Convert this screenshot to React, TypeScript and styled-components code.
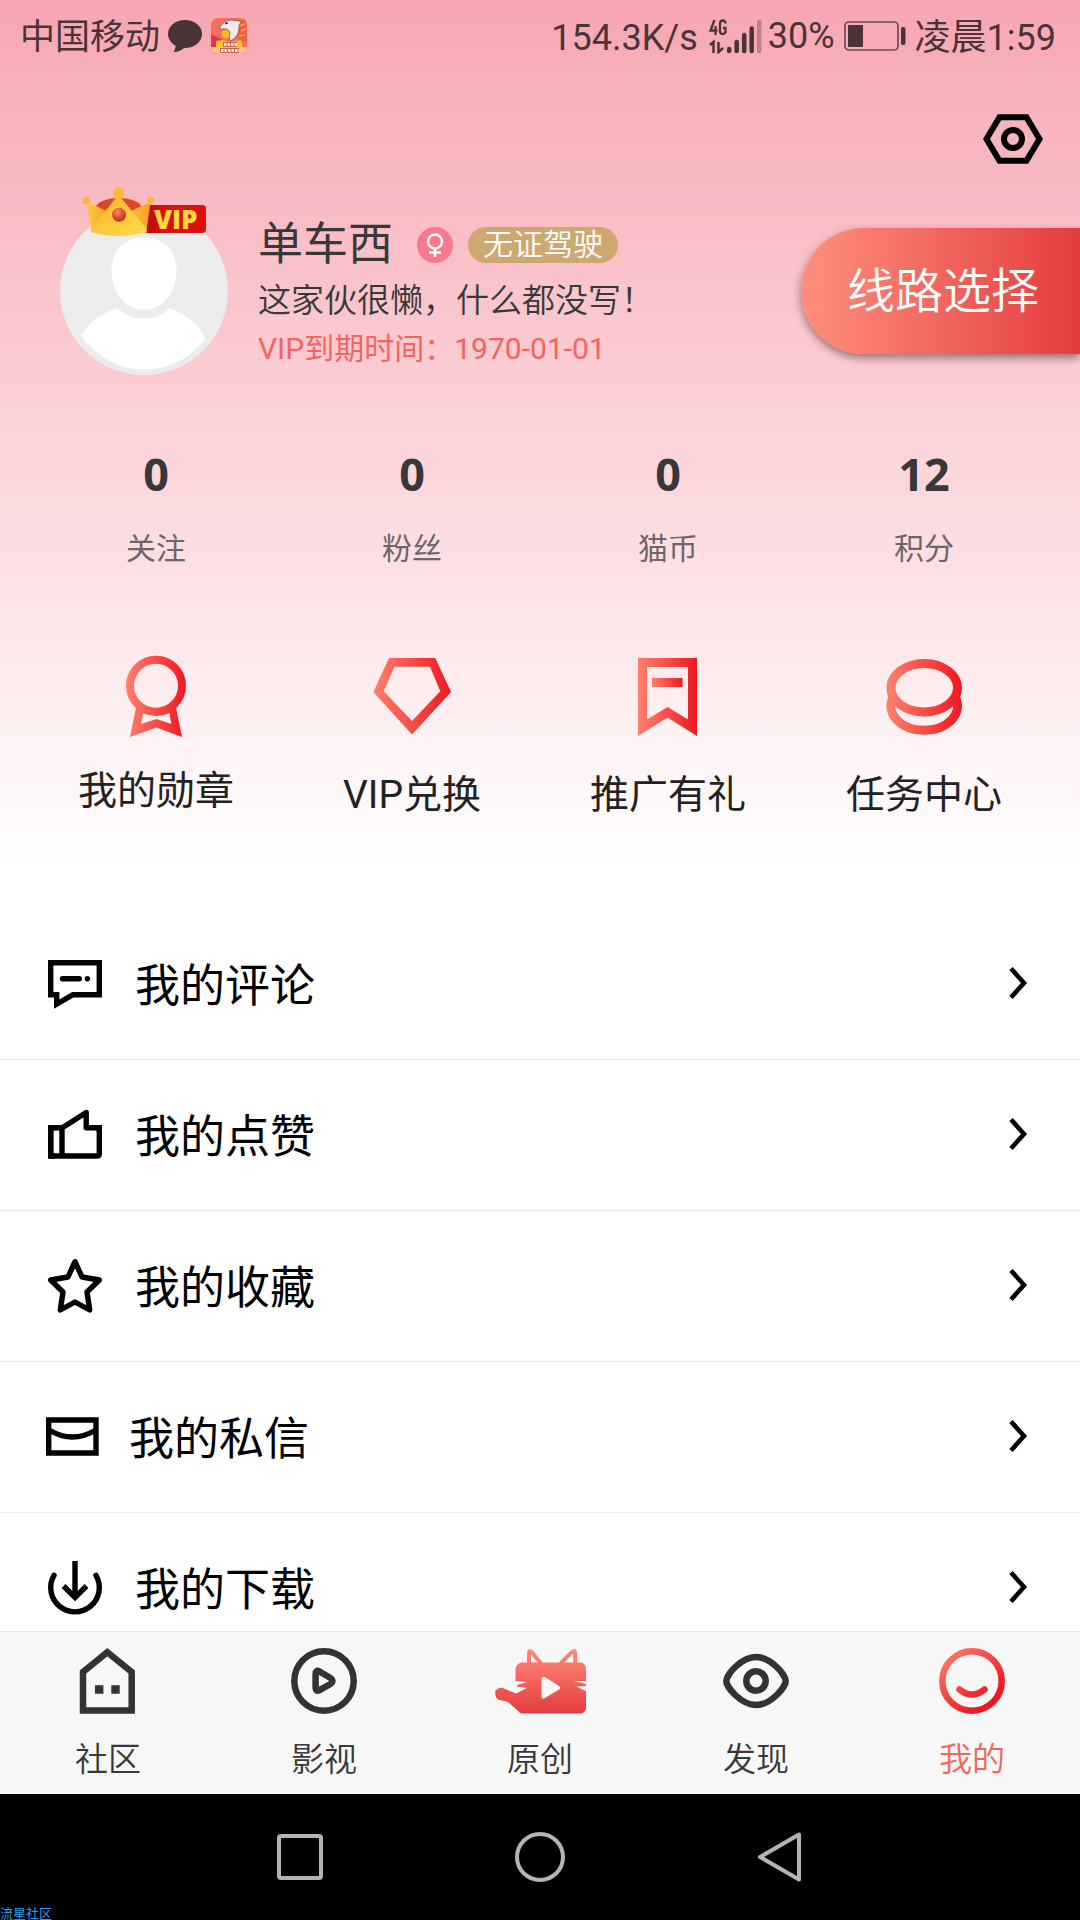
import React from "react";
import styled, { createGlobalStyle } from "styled-components";

const GlobalStyle = createGlobalStyle`
  *, *::before, *::after { box-sizing: border-box; }
  body {
    margin: 0;
    font-family: Roboto, "Noto Sans CJK SC", sans-serif;
    color: #383838;
    background: #fff;
  }
  button { border: 0; padding: 0; background: none; font: inherit; color: inherit; cursor: pointer; }
  a { color: inherit; text-decoration: none; }
  svg { display: block; flex: none; }
`;

const Screen = styled.div`
  display: flex;
  flex-direction: column;
  height: 100vh;
  overflow: hidden;
`;

const Content = styled.main`
  flex: 1;
  min-height: 0;
  overflow: hidden;
  background: linear-gradient(#f7a7b1, #ffffff 870px) no-repeat;
`;

const StatusBar = styled.header`
  display: flex;
  align-items: center;
  justify-content: space-between;
  height: 72px;
  padding: 0 24px 0 20px;
  font-size: 36px;
  line-height: 48px;
  color: #4b3437;
  font-weight: 400;
`;

const StatusGroup = styled.div<{ $gap: number }>`
  display: flex;
  align-items: center;
  gap: ${(p) => p.$gap}px;
`;

const StatusText = styled.span`
  padding-top: 4px;
`;

const Carrier = styled(StatusText)`
  font-size: 35px;
`;

const Toolbar = styled.div`
  display: flex;
  justify-content: flex-end;
  padding: 42px 37px 0;
`;

const Profile = styled.section`
  display: flex;
  align-items: center;
  margin-top: 43px;
  padding-left: 60px;
`;

const Avatar = styled.div`
  position: relative;
  flex: none;
  width: 168px;
  height: 168px;
`;

const Crown = styled.svg`
  position: absolute;
  left: 22px;
  top: -21px;
`;

const VipBadge = styled.span`
  position: absolute;
  left: 84px;
  top: -2px;
  width: 62px;
  height: 28px;
  padding-left: 10px;
  border-radius: 4px;
  background: linear-gradient(90deg, #b80808, #dc0f0f 30%);
  color: #ffd83a;
  font: 800 26px/28px "Open Sans", sans-serif;
`;

const Info = styled.div`
  flex: 1;
  margin-left: 30px;
  padding-top: 4px;
`;

const NameLine = styled.div`
  display: flex;
  align-items: center;
  height: 62px;
`;

const Name = styled.h1`
  margin: 0 24px 0 0;
  font-size: 45px;
  line-height: 60px;
  font-weight: 400;
`;

const Gender = styled.span`
  display: grid;
  place-items: center;
  width: 36px;
  height: 36px;
  margin-right: 15px;
  border-radius: 50%;
  background: #f9788a;
`;

const Tag = styled.span`
  height: 36px;
  padding: 0 15px;
  border-radius: 18px;
  background: #cda870;
  color: #fff;
  font-size: 30px;
  line-height: 36px;
  font-weight: 350;
`;

const Bio = styled.p`
  margin: 0;
  font-size: 33px;
  line-height: 50px;
  font-weight: 350;
`;

const Expiry = styled.p`
  margin: 0;
  font-size: 30px;
  line-height: 46px;
  color: #f3655c;
`;

const RouteButton = styled.button`
  height: 126px;
  padding: 2px 41px 0 46px;
  border-radius: 63px 0 0 63px;
  background: linear-gradient(90deg, #ff8f7d, #e33d3f);
  box-shadow: 0 4px 8px rgba(60, 20, 20, 0.5);
  color: #fff;
  font-size: 48px;
  line-height: 60px;
  font-weight: 350;
`;

const Grid = styled.section<{ $top: number }>`
  display: grid;
  grid-template-columns: repeat(4, 1fr);
  margin-top: ${(p) => p.$top}px;
  padding: 0 28px;
`;

const Stat = styled.a`
  display: flex;
  flex-direction: column;
  align-items: center;
  gap: 24px;
`;

const StatValue = styled.strong`
  font: 700 45px/60px "Noto Sans", sans-serif;
`;

const StatLabel = styled.span`
  font-size: 30px;
  line-height: 42px;
  color: #6b6668;
`;

const Shortcut = styled.a`
  display: flex;
  flex-direction: column;
  align-items: center;
  gap: 27px;
  font-size: 39px;
  line-height: 54px;
  color: #222;
`;

const List = styled.nav`
  margin-top: 87px;
`;

const Row = styled.a`
  display: flex;
  align-items: center;
  gap: 30px;
  height: 151px;
  padding: 0 51px 0 45px;
  border-bottom: 1px solid #ebebeb;
  color: #000;
  font-size: 45px;
  line-height: 60px;
`;

const RowLabel = styled.span`
  flex: 1;
  padding-top: 6px;
`;

const TabBar = styled.nav`
  display: grid;
  grid-template-columns: repeat(5, 1fr);
  flex: none;
  padding: 16px 0 10px;
  border-top: 1px solid #e6e6e6;
  background: #f7f7f7;
`;

const Tab = styled.a<{ $active?: boolean }>`
  display: flex;
  flex-direction: column;
  align-items: center;
  gap: 22px;
  font-size: 33px;
  line-height: 48px;
  font-weight: 350;
  color: ${(p) => (p.$active ? "#f3655c" : "#383838")};
`;

const SystemNav = styled.footer`
  position: relative;
  display: flex;
  justify-content: center;
  align-items: center;
  gap: 190px;
  flex: none;
  height: 126px;
  background: #000;
`;

const Watermark = styled.span`
  position: absolute;
  left: 0;
  bottom: 0;
  font-size: 13px;
  line-height: 12px;
  color: #2b9cf2;
`;

const Warm = ({ id, x1, x2, y2 = 0 }: { id: string; x1: number; x2: number; y2?: number }) => (
  <defs>
    <linearGradient id={id} gradientUnits="userSpaceOnUse" x1={x1} y1="0" x2={x2} y2={y2}>
      <stop offset="0" stopColor="#ff806e" />
      <stop offset="1" stopColor="#ee1820" />
    </linearGradient>
  </defs>
);

const shortcuts = [
  {
    label: "我的勋章",
    icon: (
      <svg width="90" height="86" viewBox="0 0 90 86" fill="none">
        <Warm id="medal" x1={15} x2={75} />
        <circle cx="45" cy="34.7" r="26" stroke="url(#medal)" strokeWidth="8" />
        <path fill="url(#medal)" fillRule="evenodd" d="M25.3 55 19 86 45.3 76.5 71 86 64.7 55 45 58ZM32.3 61.7A30 30 0 0 0 58.3 61.7L60.3 73 45.7 68 30 73Z" />
      </svg>
    ),
  },
  {
    label: "VIP兑换",
    icon: (
      <svg width="90" height="90" viewBox="0 0 90 90">
        <Warm id="gem" x1={6} x2={84} />
        <path fill="url(#gem)" fillRule="evenodd" d="M22 7H68.3L84 41 45 83.5 6.3 41ZM27.3 15.7 16.7 40.3 45 70 73.3 40.3 63 15.7Z" />
      </svg>
    ),
  },
  {
    label: "推广有礼",
    icon: (
      <svg width="90" height="90" viewBox="0 0 90 90">
        <Warm id="mark" x1={15} x2={74} />
        <Warm id="markbar" x1={29} x2={60} />
        <path fill="url(#mark)" fillRule="evenodd" d="M15 7H74V85L44.5 66.5 15 85ZM24 16V68.5L44.5 56 65 68.5V16Z" />
        <rect fill="url(#markbar)" x="29" y="27" width="30.5" height="9" />
      </svg>
    ),
  },
  {
    label: "任务中心",
    icon: (
      <svg width="90" height="90" viewBox="0 0 90 90" fill="none" strokeWidth="9">
        <Warm id="coin" x1={8} x2={83} />
        <ellipse cx="45.2" cy="36.7" rx="33.3" ry="24.2" stroke="url(#coin)" />
        <path d="M13.8 47A33.3 24.2 0 1 0 76.6 47" stroke="url(#coin)" />
      </svg>
    ),
  },
];

const line = { fill: "none", stroke: "#000", strokeWidth: 5.4 };

const rows = [
  {
    label: "我的评论",
    icon: (
      <svg width="60" height="60" viewBox="0 0 60 60" {...line}>
        <path d="M5.7 8.7H54.3V40.7H28L11.7 50V40.7H5.7Z" />
        <path d="M17.5 24.7H34.3M42.3 24.7H42.4" strokeLinecap="round" />
      </svg>
    ),
  },
  {
    label: "我的点赞",
    icon: (
      <svg width="60" height="60" viewBox="0 0 60 60" {...line}>
        <path d="M17 22.7H5.7V51H52Q54.3 51 54.3 48.7V22.7H41.2V7.5L17 23V51" strokeLinejoin="round" />
        <path d="M10 22.7H5.7V51H10M50 22.7H54.3V27" />
      </svg>
    ),
  },
  {
    label: "我的收藏",
    icon: (
      <svg width="60" height="60" viewBox="0 0 60 60" {...line} strokeLinejoin="round">
        <path d="M30 5.7 37 21 54.3 24 42 36 44.7 54 30 46 15.3 54 18 36 5.7 24 23 21Z" />
      </svg>
    ),
  },
  {
    label: "我的私信",
    icon: (
      <svg width="54" height="60" viewBox="0 0 54 60" {...line}>
        <path d="M3.7 13H51V46H3.7ZM4 23Q27.4 37 51 23" />
      </svg>
    ),
  },
  {
    label: "我的下载",
    icon: (
      <svg width="60" height="60" viewBox="0 0 60 60" {...line}>
        <path d="M9 17.3A24.3 24.3 0 1 0 51 17.3" strokeLinecap="round" />
        <path d="M30 3V40M18.5 28 30 39.5 41.5 28" />
      </svg>
    ),
  },
];

const stats = [
  ["0", "关注"],
  ["0", "粉丝"],
  ["0", "猫币"],
  ["12", "积分"],
];

const dark = { fill: "none", stroke: "#333", strokeWidth: 6.5 };

const tabs = [
  {
    label: "社区",
    icon: (
      <svg width="66" height="66" viewBox="0 0 66 66" {...dark}>
        <path d="M8 24 32.3 4.3 56.7 24V62.5H8Z" />
        <path d="M20 41.5H28.4M36.3 41.5H44.7" strokeWidth="8.6" />
      </svg>
    ),
  },
  {
    label: "影视",
    icon: (
      <svg width="66" height="66" viewBox="0 0 66 66" {...dark} strokeLinejoin="round">
        <circle cx="33" cy="33" r="29.7" />
        <path d="M24.6 26Q24.6 21.5 28.5 23.5L39.5 30Q43.5 33 39.5 36L28.5 42.2Q24.6 44.2 24.6 39.7Z" />
      </svg>
    ),
  },
  {
    label: "原创",
    icon: (
      <svg width="96" height="66" viewBox="0 0 96 66">
        <defs>
          <linearGradient id="cat" gradientUnits="userSpaceOnUse" x1="0" y1="0" x2="0" y2="66">
            <stop offset="0" stopColor="#ff8c7a" />
            <stop offset="1" stopColor="#e43b3e" />
          </linearGradient>
        </defs>
        <path d="M37 17V5Q37.5 1 40.5 5L50 17M67 17 79 5Q82.5 1 83 5L83.5 17" fill="none" stroke="url(#cat)" strokeWidth="4" />
        <path
          fill="url(#cat)"
          fillRule="evenodd"
          d="M29 14.5H89Q94 16 94 21V33H82L94 36V38L84 38.5 94 43V60Q94 63 90 65.5H29L16 54 6 51.5Q2 48 3.5 42.5 7 38 13 41L24 45.5 35 40 25 38.5V37L35 34 23.5 33V21Q24 16 29 14.5ZM49.5 31V49Q50 52 53 50L67 41.5Q69 40 67 38L53 29Q50 28 49.5 31Z"
        />
      </svg>
    ),
  },
  {
    label: "发现",
    icon: (
      <svg width="66" height="66" viewBox="0 0 66 66" {...dark}>
        <path d="M3.3 33C3.3 27 18 9 33 9S62.7 27 62.7 33 48 57 33 57 3.3 39 3.3 33Z" />
        <circle cx="33" cy="33" r="9.7" />
      </svg>
    ),
  },
  {
    label: "我的",
    active: true,
    icon: (
      <svg width="66" height="66" viewBox="0 0 66 66" fill="none" strokeWidth="6.5">
        <Warm id="smile" x1={8} x2={50} y2={50} />
        <circle cx="33" cy="33" r="29.7" stroke="url(#smile)" />
        <path d="M20.5 41.5Q33 51.5 45.5 41.5" stroke="url(#smile)" strokeLinecap="round" />
      </svg>
    ),
  },
];

const AppBadge = () => (
  <svg width="36" height="36" viewBox="0 0 36 36">
    <defs>
      <clipPath id="app"><rect width="36" height="36" rx="7" /></clipPath>
    </defs>
    <g clipPath="url(#app)">
      <rect width="36" height="36" fill="#f4705c" />
      <path d="M0 16 12 22 6 36H0Z" fill="#e92f55" />
      <path d="M24 3 36 0V24L27 22Z" fill="#f0603c" />
      <path d="M28 8 34 6M30 13 35 11M28 18 34 17" stroke="#f9a06a" strokeWidth="1.5" />
      <path d="M5 23 12 22 17 24 30 22 32 31H5Z" fill="#f6c62a" />
      <path d="M0 29H36V36H0Z" fill="#fac48a" />
      <circle cx="15" cy="16" r="4.5" fill="#f3bd23" />
      <path d="M8 11Q12 2 20 2L29 3Q31 4 28 7 29 18 20 23 17 21 19 16 19 12 15 11Z" fill="#f3e9e9" stroke="#7c4040" strokeWidth="0.7" />
      <path d="M14 5.5 17 5" stroke="#333" strokeWidth="1.5" />
      <path d="M12 26.5H26M9 32.5H28" stroke="#d0604c" strokeWidth="5" />
      <path d="M13 26.5H26M10 32.5H28" stroke="#fff0e0" strokeWidth="3" strokeDasharray="2.5 1" />
    </g>
  </svg>
);

export default function App() {
  return (
    <Screen>
      <GlobalStyle />
      <Content>
        <StatusBar>
          <StatusGroup $gap={9}>
            <StatusGroup $gap={8}>
              <Carrier>中国移动</Carrier>
              <svg width="34" height="34" viewBox="0 0 34 34" fill="#4b3437">
                <path d="M7.5 24Q8 30 5.5 33 13 33 17 28Z" />
                <ellipse cx="17" cy="15" rx="17" ry="14" />
              </svg>
            </StatusGroup>
            <AppBadge />
          </StatusGroup>
          <StatusGroup $gap={9}>
            <StatusGroup $gap={11}>
              <StatusText>154.3K/s</StatusText>
              <StatusGroup $gap={6}>
                <svg width="53" height="36" viewBox="0 0 53 36" fill="none" stroke="#4b3437">
                  <path d="M5.5 2 1.5 12.5H8.5M6.5 8V17M16.5 5.5Q16.5 2.5 13.8 2.5T11 5.5V13Q11 16 13.8 16T16.5 13V10H14" strokeWidth="2.3" />
                  <path d="M1 27 4.5 24V35M9.5 24V34L14 30" strokeWidth="2.5" />
                  <path d="M20.2 31V33M27.7 24V33M35.2 17V33M42.7 10.5V33" strokeWidth="4.5" strokeLinecap="round" />
                  <path d="M50.2 4V33" strokeWidth="4.5" strokeLinecap="round" opacity="0.35" />
                </svg>
                <span>30%</span>
              </StatusGroup>
            </StatusGroup>
            <svg width="62" height="36" viewBox="0 0 62 36">
              <rect x="1" y="4" width="53" height="28" rx="4" fill="none" stroke="#6f4d51" strokeWidth="1.7" />
              <rect x="4" y="7" width="15" height="22" rx="1" fill="#4b3437" />
              <rect x="57" y="9" width="4.5" height="18" rx="2" fill="#4b3437" />
            </svg>
            <StatusText>凌晨1:59</StatusText>
          </StatusGroup>
        </StatusBar>

        <Toolbar>
          <button aria-label="设置">
            <svg width="60" height="50" viewBox="0 0 60 50" fill="none" stroke="#000" strokeWidth="6">
              <path d="M3.5 25 16.5 3.2H43.5L56.5 25 43.5 46.8H16.5Z" />
              <circle cx="30" cy="25" r="9" />
            </svg>
          </button>
        </Toolbar>

        <Profile>
          <Avatar>
            <svg width="168" height="168" viewBox="0 0 168 168">
              <circle cx="84" cy="84" r="84" fill="#ececec" />
              <path fill="#fff" d="M84 30.5C105 30.5 116.5 44 116.5 64 116.5 86 102 103 84 103S51.5 86 51.5 64C51.5 44 63 30.5 84 30.5Z" />
              <path fill="#fff" d="M57.5 101Q69 112 84 112T109.5 101Q137 111 145 132 121 162.5 84 162.5T21 129Q31 110 57.5 101Z" />
            </svg>
            <VipBadge>VIP</VipBadge>
            <Crown width="76" height="54" viewBox="0 0 76 54">
              <defs>
                <linearGradient id="gold" x1="0" y1="0" x2="1" y2="1">
                  <stop offset="0" stopColor="#fbb02c" />
                  <stop offset="1" stopColor="#ffdf48" />
                </linearGradient>
                <linearGradient id="goldSide" x1="0" y1="0" x2="1" y2="0">
                  <stop offset="0" stopColor="#ffc93b" />
                  <stop offset="1" stopColor="#f79d1e" />
                </linearGradient>
                <radialGradient id="ruby" cx="0.4" cy="0.3" r="0.7">
                  <stop offset="0" stopColor="#f7866a" />
                  <stop offset="1" stopColor="#cf2413" />
                </radialGradient>
              </defs>
              <ellipse cx="36.7" cy="22" rx="23" ry="10" fill="#dc4a25" />
              <path d="M5 16 29 27 16 46 9 43Z" fill="url(#goldSide)" />
              <path d="M68.5 16 45 27 58 46 64.7 43Z" fill="url(#goldSide)" />
              <path d="M33 13Q36.7 8 40 13L64.7 43V46Q52 50 36.7 50T9 46V43Z" fill="url(#gold)" />
              <circle cx="36.7" cy="6.7" r="5.8" fill="#fdbb35" />
              <circle cx="4.2" cy="14.5" r="3.7" fill="#fdb633" />
              <circle cx="68.5" cy="14.5" r="3.7" fill="#fdb633" />
              <circle cx="37" cy="28.7" r="7" fill="url(#ruby)" />
            </Crown>
          </Avatar>
          <Info>
            <NameLine>
              <Name>单车西</Name>
              <Gender>
                <svg width="18" height="24" viewBox="0 0 18 24" fill="none" stroke="#fff" strokeWidth="2.5">
                  <circle cx="9" cy="8.5" r="7" />
                  <path d="M9 15.5V24M3 19.5H15" />
                </svg>
              </Gender>
              <Tag>无证驾驶</Tag>
            </NameLine>
            <Bio>这家伙很懒，什么都没写！</Bio>
            <Expiry>VIP到期时间：1970-01-01</Expiry>
          </Info>
          <RouteButton>线路选择</RouteButton>
        </Profile>

        <Grid $top={69}>
          {stats.map(([value, label]) => (
            <Stat href="#" key={label}>
              <StatValue>{value}</StatValue>
              <StatLabel>{label}</StatLabel>
            </Stat>
          ))}
        </Grid>

        <Grid $top={81}>
          {shortcuts.map((s) => (
            <Shortcut href="#" key={s.label}>
              {s.icon}
              <span>{s.label}</span>
            </Shortcut>
          ))}
        </Grid>

        <List>
          {rows.map((r) => (
            <Row href="#" key={r.label}>
              {r.icon}
              <RowLabel>{r.label}</RowLabel>
              <svg width="20" height="36" viewBox="0 0 20 36" fill="none" stroke="#000" strokeWidth="4.6">
                <path d="M2 2.5 15 17 2 31.5" />
              </svg>
            </Row>
          ))}
        </List>
      </Content>

      <TabBar>
        {tabs.map((t) => (
          <Tab href="#" key={t.label} $active={t.active}>
            {t.icon}
            <span>{t.label}</span>
          </Tab>
        ))}
      </TabBar>

      <SystemNav>
        <button aria-label="最近任务">
          <svg width="50" height="50" viewBox="0 0 50 50" fill="none" stroke="#b4b4b4" strokeWidth="4">
            <rect x="4" y="4" width="42" height="42" rx="2" />
          </svg>
        </button>
        <button aria-label="主屏幕">
          <svg width="50" height="50" viewBox="0 0 50 50" fill="none" stroke="#b4b4b4" strokeWidth="4">
            <circle cx="25" cy="25" r="23" />
          </svg>
        </button>
        <button aria-label="返回">
          <svg width="50" height="50" viewBox="0 0 50 50" fill="none" stroke="#b4b4b4" strokeWidth="4" strokeLinejoin="round">
            <path d="M44 2.5V47.5L5 25Z" />
          </svg>
        </button>
        <Watermark>流星社区</Watermark>
      </SystemNav>
    </Screen>
  );
}
